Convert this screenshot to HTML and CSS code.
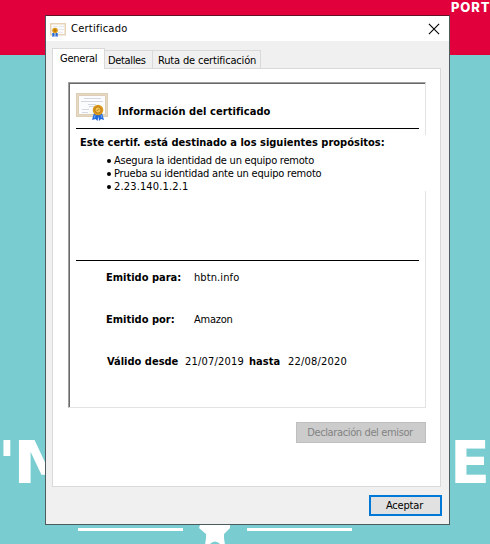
FILE: index.html
```html
<!DOCTYPE html>
<html lang="es">
<head>
<meta charset="utf-8">
<title>Certificado</title>
<link rel="stylesheet" href="styles.css">
</head>
<body>
<div class="site">
  <header class="site-header">PORT</header>
  <div class="headline"><span class="apostrophe">'</span><span class="letter-m">M</span><span class="letter-e">E</span></div>
  <div class="divider">
    <i class="rule"></i>
    <svg class="star" width="34" height="20" viewBox="0 0 34 20"><path fill="#fff" d="M2 0H32V3L26 9V13L27 20H23Q17 13 11 20H7L8 13V9L1 3Z"/></svg>
    <i class="rule"></i>
  </div>
</div>
<main class="window">
  <div class="titlebar">
    <svg class="small-icon" width="16" height="14" viewBox="0 0 16 14">
      <rect x=".75" y=".75" width="14.5" height="11" fill="#fff" stroke="#e8d3b6" stroke-width="1.5"/>
      <path d="M3 3.5h5M9 3.5h5M8 6.5h6M8 9.5h5" stroke="#e6e9ee" stroke-width="1.6"/>
      <path d="M2.3 10h2.2v4l-1-.8-1.200.8zM5.500 10h2.200v4l-1.200-.8-1 .8z" fill="#2469dc"/>
      <circle cx="5" cy="7.500" r="2.800" fill="#d99a17"/><circle cx="5" cy="7.500" r="1.200" fill="#b87400"/>
    </svg>
    <span class="t-title">Certificado</span>
    <svg class="close" width="12" height="12" viewBox="0 0 12 12"><path d="M.9.9 11.1 11.1M11.1.9.9 11.1" stroke="#000" stroke-width="1.1"/></svg>
  </div>
  <div class="tabs">
    <div class="tab active"><span class="t-general">General</span></div>
    <div class="tab details"><span class="t-details">Detalles</span></div>
    <div class="tab route"><span class="t-route">Ruta de certificación</span></div>
  </div>
  <section class="panel">
    <div class="certificate">
      <div class="heading">
        <svg width="32" height="29" viewBox="0 0 32 29">
          <rect x="1.5" y="1.5" width="29" height="21" fill="#fbfcfe" stroke="#dccbb1" stroke-width="3"/>
          <rect x="1.5" y="1.5" width="29" height="21" fill="none" stroke="#f0e6d6" stroke-width="1.5" stroke-dasharray="1 1"/>
          <path d="M8 5.500h17M5 8.500h22M12 11.500h8M13 13.500h7M6 16.500h7M6 19.500h6" stroke="#d2d7e0" stroke-width="1"/>
          <path d="M18 20h5l-1.500 8-2-2-3.500 1zM22 20h4l2 7-3-1-2 2z" fill="#2168de"/>
          <path d="M19 22l-.5 3M25 22l1 3" stroke="#70adff"/>
          <circle cx="22" cy="17" r="5.300" fill="#dc9b1c"/><circle cx="22" cy="17" r="3.200" fill="#f4c557" stroke="#b87710"/>
          <path d="M20.500 18l3-2" stroke="#c6841b"/>
        </svg>
        <b class="t-info">Información del certificado</b>
      </div>
      <div class="purposes">
        <b class="t-purpose">Este certif. está destinado a los siguientes propósitos:</b>
        <ul>
          <li><span class="t-p1">Asegura la identidad de un equipo remoto</span></li>
          <li><span class="t-p2">Prueba su identidad ante un equipo remoto</span></li>
          <li><span class="t-p3">2.23.140.1.2.1</span></li>
        </ul>
      </div>
      <div class="issued">
        <div class="row"><b class="t-for">Emitido para:</b><span class="t-host">hbtn.info</span></div>
        <div class="row"><b class="t-by">Emitido por:</b><span class="t-amazon">Amazon</span></div>
        <div class="row dates"><b class="t-from">Válido desde</b><span class="t-date">21/07/2019</span><b class="t-to">hasta</b><span class="t-date">22/08/2020</span></div>
      </div>
    </div>
    <button class="issuer" disabled><span class="t-issuer">Declaración del emisor</span></button>
  </section>
  <button class="accept"><span class="t-accept">Aceptar</span></button>
</main>
</body>
</html>
```
FILE: styles.css
```css
* { box-sizing: border-box; }
body {
  margin: 0; width: 490px; height: 544px; overflow: hidden; position: relative;
  background: #79cdd1; color: #000;
  font: 11px/13px "DejaVu Sans Condensed", "DejaVu Sans", sans-serif;
  font-stretch: condensed;
}
span, b { white-space: nowrap; }
button { font: inherit; padding: 0; border-radius: 0; display: flex; align-items: center; justify-content: center; }

.site { width: 490px; height: 544px; overflow: hidden; font-stretch: normal; color: #fff; }
.site-header { height: 55px; background: #e1003c; padding: 0 0 0 451px; font: 800 13px/14px Inter, sans-serif; letter-spacing: .9px; overflow: hidden; }
.headline { height: 70px; margin-top: 373px; display: flex; font: bold 58px/70px "DejaVu Sans", sans-serif; }
.headline span { transform-origin: 0 50%; }
.apostrophe { width: 15px; margin-left: -2px; }
.letter-m { width: 437px; transform: scaleX(1.12); }
.letter-e { width: 40px; transform: scaleX(1.01); }
.divider { display: flex; padding-left: 78px; margin-top: 27px; }
.rule { width: 105px; height: 3px; background: #fff; margin-top: 3px; }
.star { margin: 0 15px; }

.window { position: absolute; left: 45px; top: 15px; width: 405px; height: 510px; border: 1px solid #4d5c5e; border-top-color: #640f28; background: #f0f0f0; }
.titlebar { height: 25px; background: #fff; display: flex; align-items: center; padding: 0 9px 0 4px; }
.small-icon { margin: 2px 5px 0 0; }
.close { margin-left: auto; }
.tabs { height: 27px; display: flex; align-items: flex-end; padding-left: 6px; }
.tab { height: 18px; border: 1px solid #d9d9d9; border-bottom: 0; padding: 3px 0 0 3px; }
.tab.active { height: 21px; width: 53px; padding: 3px 0 0 7px; background: #fff; margin-bottom: -1px; position: relative; }
.details { width: 48px; border-left: 0; }
.route { width: 108px; border-left: 0; padding-left: 5px; }
.panel { margin-left: 6px; width: 389px; height: 419px; border: 1px solid #d9d9d9; background: #fff; padding: 13px 14px 0 15px; }
.certificate { position: relative; width: 358px; height: 326px; border: 1px solid #e3e3e3; border-top-color: #a0a0a0; border-left-color: #a0a0a0; box-shadow: inset 1px 1px #696969; padding: 10px 0 0 7px; }
.certificate::after { content: ""; position: absolute; right: -1px; top: 52px; width: 1px; height: 56px; background: #fff; }
.heading { width: 343px; height: 36px; border-bottom: 1px solid #000; display: flex; }
.heading b { margin: 12px 0 0 10px; }
.purposes { height: 132px; width: 343px; border-bottom: 1px solid #000; padding: 7px 0 0 4px; }
.purposes ul { list-style: none; margin: 5px 0 0 27px; padding: 0; }
.purposes li { display: flex; align-items: center; height: 13px; }
.purposes li::before { content: ""; width: 4px; height: 4px; border-radius: 2px; background: #000; margin: 1px 3px 0 0; }
.issued { padding: 10px 0 0 30px; }
.row { display: flex; height: 42px; }
.row b { width: 88px; }
.dates { padding-left: 1px; }
.dates b.t-from { width: 78px; }
.dates b.t-to { width: 39px; margin-left: 5px; }
.issuer { width: 130px; height: 21px; margin: 14px 0 0 auto; background: #ccc; border: 1px solid #bfbfbf; color: #838383; }
.accept { width: 73px; height: 21px; margin: 8px 7px 0 auto; background: #e1e1e1; border: 2px solid #0078d7; color: #000; }

.t-title { letter-spacing: .25px; }
.t-general { letter-spacing: -.25px; }
.t-details { letter-spacing: -.35px; }
.t-route { letter-spacing: -.17px; }
.t-info { letter-spacing: .07px; }
.t-p1 { letter-spacing: -.23px; }
.t-p2 { letter-spacing: -.2px; }
.t-p3 { letter-spacing: .15px; }
.t-host { letter-spacing: .1px; }
.t-amazon { letter-spacing: -.25px; }
.t-date { letter-spacing: .2px; }
.t-issuer { letter-spacing: -.37px; padding-right: 2px; }
.t-accept { letter-spacing: -.2px; padding-right: 2px; }
```
